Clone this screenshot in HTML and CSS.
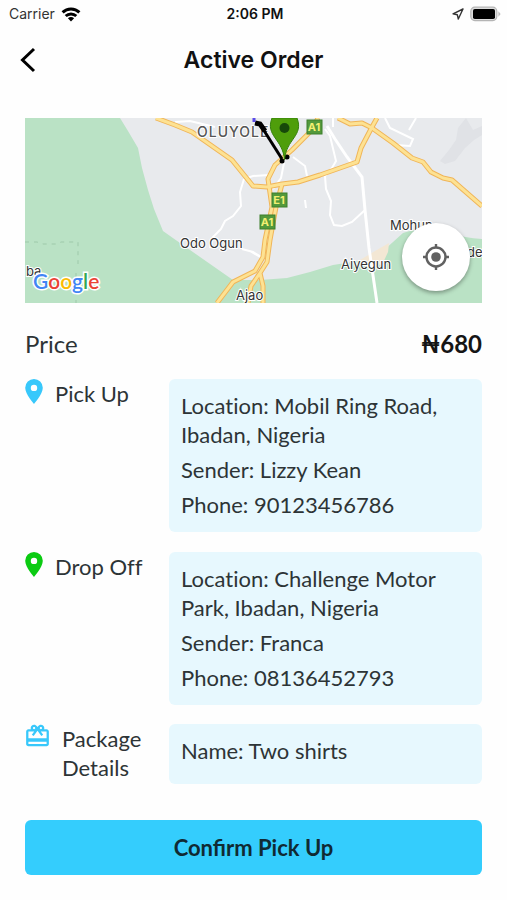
FILE: index.html
```html
<!DOCTYPE html>
<html lang="en">
<head>
<meta charset="utf-8">
<meta name="viewport" content="width=device-width, initial-scale=1">
<title>Active Order</title>
<link rel="stylesheet" href="styles.css">
</head>
<body>
<div class="status">
  <div class="status-left"><span>Carrier</span>
    <svg width="20" height="15" viewBox="0 0 20 15" fill="none" stroke="#000" stroke-width="3" aria-hidden="true"><path d="M1.6 5.4C6.3.9 13.7.9 18.4 5.4"/><path d="M4.7 9C7.7 6.2 12.3 6.2 15.3 9"/><path d="M10 14.5 6.9 11.3C8.6 9.7 11.4 9.7 13.1 11.3Z" fill="#000" stroke="none"/></svg>
  </div>
  <time class="status-time">2:06 PM</time>
  <div class="status-right">
    <svg width="12" height="12" viewBox="0 0 12 12" fill="none" stroke="#333" stroke-width="1.4" stroke-linejoin="round" aria-hidden="true"><path d="M11 1 1 5.8 5.3 6.7 6.3 11Z"/></svg>
    <svg width="31" height="16" viewBox="0 0 31 16" aria-hidden="true"><rect x=".8" y="1.2" width="26" height="13.4" rx="4" fill="#ddd" stroke="#b5b5b5" stroke-width="1.2"/><rect x="3" y="3" width="22" height="10" rx="1.8"/><path d="M28.4 5.2 30.6 8 28.4 10.8Z" fill="#bbb"/></svg>
  </div>
</div>
<header class="header">
  <button class="back" type="button" aria-label="Back"><svg width="16" height="26" viewBox="0 0 16 26" fill="none" stroke="#000" stroke-width="3"><path d="M14 2 2.5 13 14 24"/></svg></button>
  <h1>Active Order</h1>
</header>
<main class="content">
  <div class="map">
    <svg class="map-art" viewBox="0 0 457 185" role="img" aria-label="Map of the route">
      <rect width="457" height="185" fill="#e8eaed"/>
      <path d="M0 0H95L103 13 113 30 117 50 123 72 129 91 138 113 155 125 208 162 235 162 262 160 285 154 308 147 340 142 358 133 378 115Q400 108 420 114T457 121V185H0Z" fill="#bae2c5"/>
      <path d="M335 142 350 133 364 125 363 134 357 147 338 145Z" fill="#f3e7d4"/>
      <path d="M441 0 433 10 431 22 424 32 415 43 420 46 430 43 440 30 449 22 457 17V8L448 12Z" fill="#e0e2e6"/>
      <path d="M0 124H12L18 126H32L36 124H53V146M51 155V185" fill="none" stroke="#9ec9aa" stroke-dasharray="4 5"/>
      <g fill="none" stroke="#fff" stroke-width="2">
        <path d="M302 8 310 21 322 39 337 59 340 92 344 130 352 185" stroke-width="3"/>
        <path d="M300 11 305 18 311 43 307 50 300 58 301 71 306 83 305 97 309 107 317 108 327 104 340 92M150 4 165 3 190 9M219 61 215 74 216 88 208 98 200 103 196 111 188 119 185 130M219 61 228 58 244 57M217 131 228 134 238 140M268 39 280 48 282 58M280 82 281 90M360 0 365 10 388 21 385 28 370 27M308 0V9M259 45 256 60 248 71M225 133 237 140M391 0 384 12"/>
      </g>
      <g fill="none" stroke-linejoin="round">
        <g stroke="#f0b558" stroke-width="5">
          <path id="r1" d="M131 0 150 7 167 14 187 28 207 42 228 68 242 69 257 66 273 64 295 57 332 44 336 30 347 9 352 0"/>
          <path id="r2" d="M313 0 325 6 337 5 347 10 368 25 387 40 398 44 406 54 418 60 427 62 457 88"/>
          <path id="r3" d="M293 0 287 12 267 32 250 47 243 61 247 89 240 122 238 139 230 153 208 164 192 185"/>
          <path id="r4" d="M257 66 251 89 245 122 242 144 235 155 238 168V185M235 155 226 168 223 185"/>
        </g>
        <g stroke="#fde293" stroke-width="3"><use href="#r1"/><use href="#r2"/><use href="#r3"/><use href="#r4"/></g>
      </g>
      <g class="shield"><rect x="282" y="2" width="15" height="14"/><rect x="247" y="75" width="15" height="14"/><rect x="235" y="97" width="15" height="14"/><text x="289" y="13">A1</text><text x="254" y="86">E1</text><text x="242" y="108">A1</text></g>
      <g class="place"><text x="172" y="19" class="district">OLUYOLE</text><text x="155" y="130">Odo Ogun</text><text x="211" y="182">Ajao</text><text x="316" y="151">Aiyegun</text><text x="365" y="112">Mohun</text><text x="442" y="139">de</text><text x="1" y="158">ba</text></g>
      <path d="M230 5 235 6 240 13" fill="none" stroke="#000" stroke-width="5"/><path d="M238 11 257 41" fill="none" stroke="#000" stroke-width="3"/><path d="M229 0V4" stroke="#5a4be8" stroke-width="3"/><circle cx="257" cy="43" r="2.5"/><circle cx="262" cy="39" r="2.5"/>
      <path d="M247 0C240 18 258 21 259.500 42 261 21 279 18 272 0Z" fill="#4f9e0b" stroke="#35810b"/><circle cx="259.500" cy="10" r="5" fill="#17480a"/>
      <text x="8" y="171" class="google"><tspan fill="#4285f4">G</tspan><tspan fill="#ea4335">o</tspan><tspan fill="#fbbc05">o</tspan><tspan fill="#4285f4">g</tspan><tspan fill="#34a853">l</tspan><tspan fill="#ea4335">e</tspan></text>
    </svg>
    <button class="locate" type="button" aria-label="My location"><svg width="28" height="28" viewBox="0 0 28 28" fill="none" stroke="#616161" stroke-width="2.400"><circle cx="14" cy="14" r="9.500"/><circle cx="14" cy="14" r="4.800" fill="#616161" stroke="none"/><path d="M14 1V5M14 23V27M1 14H5M23 14H27"/></svg></button>
  </div>
  <div class="price"><span>Price</span><strong>₦680</strong></div>
  <section class="row">
    <h2 class="label"><svg width="18" height="25" viewBox="0 0 18 25" aria-hidden="true"><path fill="#38c8fb" fill-rule="evenodd" d="M9 0A8.800 8.800 0 0 0 .2 8.800C.2 15.300 9 25 9 25S17.800 15.300 17.800 8.800A8.800 8.800 0 0 0 9 0ZM9 5.700A3.200 3.200 0 1 1 9 12.100 3.200 3.200 0 0 1 9 5.700Z"/></svg><span>Pick Up</span></h2>
    <div class="card"><p>Location: Mobil Ring Road, Ibadan, Nigeria</p><p>Sender: Lizzy Kean</p><p>Phone: 90123456786</p></div>
  </section>
  <section class="row">
    <h2 class="label"><svg width="18" height="25" viewBox="0 0 18 25" aria-hidden="true"><path fill="#0bcb12" fill-rule="evenodd" d="M9 0A8.800 8.800 0 0 0 .2 8.800C.2 15.300 9 25 9 25S17.800 15.300 17.800 8.800A8.800 8.800 0 0 0 9 0ZM9 5.700A3.200 3.200 0 1 1 9 12.100 3.200 3.200 0 0 1 9 5.700Z"/></svg><span>Drop Off</span></h2>
    <div class="card"><p>Location: Challenge Motor Park, Ibadan, Nigeria</p><p>Sender: Franca</p><p>Phone: 08136452793</p></div>
  </section>
  <section class="row">
    <h2 class="label package"><svg width="25" height="24" viewBox="1 2 22 20" fill="#38c8fb" aria-hidden="true"><path d="M20 6h-2.180c.11-.31.18-.65.18-1 0-1.660-1.340-3-3-3-1.050 0-1.960.54-2.500 1.350l-.5.670-.5-.680C10.960 2.540 10.050 2 9 2 7.340 2 6 3.340 6 5c0 .35.070.69.180 1H4c-1.110 0-1.990.89-1.990 2L2 19c0 1.110.89 2 2 2h16c1.110 0 2-.89 2-2V8c0-1.110-.89-2-2-2zm-5-2c.55 0 1 .45 1 1s-.45 1-1 1-1-.45-1-1 .45-1 1-1zM9 4c.55 0 1 .45 1 1s-.45 1-1 1-1-.45-1-1 .45-1 1-1zm11 15H4v-2h16v2zm0-5H4V8h5.080L7 10.830 8.620 12 12 7.400l3.380 4.600L17 10.830 14.920 8H20v6z"/></svg><span>Package Details</span></h2>
    <div class="card card-short"><p>Name: Two shirts</p></div>
  </section>
  <button class="confirm" type="button">Confirm Pick Up</button>
</main>
</body>
</html>
```
FILE: styles.css
```css
* { box-sizing: border-box; }
body { margin: 0; background: #fefefe; color: #2d3436; font: 22px/29px Lato, "Noto Sans", sans-serif; }
button { border: 0; padding: 0; font: inherit; color: inherit; cursor: pointer; }
h1, h2, p { margin: 0; font-weight: 400; font-size: inherit; }
svg { display: block; flex: none; }

.status { display: grid; grid-template-columns: 1fr auto 1fr; align-items: center; height: 28px; padding: 0 6px 0 9px; font: 14px/20px Inter, sans-serif; color: #333; }
.status-left, .status-right { display: flex; align-items: center; gap: 6px; }
.status-right { justify-content: flex-end; }
.status-time { font-weight: 600; color: #111; }

.header { display: grid; grid-template-columns: 44px 1fr 44px; align-items: center; height: 64px; padding: 0 8px; }
.back { display: grid; place-items: center; height: 44px; background: none; padding-right: 4px; }
.header h1 { text-align: center; font: 600 23px/28px Inter, sans-serif; color: #111; }

.content { padding: 26px 25px 24px; }
.map { position: relative; }
.map-art { width: 100%; height: auto; }
.place { font: 13px Inter, sans-serif; fill: #333; stroke: #fff; stroke-width: 2px; paint-order: stroke; }
.place .district { font-size: 14px; font-weight: 500; letter-spacing: 1px; fill: #555; }
.shield { fill: #53993b; stroke: #3d7f2c; }
.shield text { font: 700 11px Inter, sans-serif; fill: #f2ef72; stroke: none; text-anchor: middle; }
.google { font: 600 21px Lato, sans-serif; stroke: #fff; stroke-width: 3px; paint-order: stroke; }
.locate { position: absolute; right: 12px; bottom: 12px; width: 68px; height: 68px; display: grid; place-items: center; border-radius: 50%; background: #fff; box-shadow: 0 2px 4px rgb(0 0 0 / 35%); }

.price { display: flex; justify-content: space-between; margin: 26px 0 20px; font-size: 24px; line-height: 30px; }
.price strong { color: #151515; }
.row { display: grid; grid-template-columns: 144px 1fr; align-items: start; margin-bottom: 20px; font-variant-ligatures: none; }
.row:last-of-type { margin-top: -1px; }
.label { display: flex; align-items: flex-start; gap: 12px; }
.package { padding-right: 16px; }
.card { background: #e7f8fe; border-radius: 6px; padding: 12px 12px 13px; display: grid; gap: 6px; }
.card-short { min-height: 60px; align-content: start; }
.confirm { display: block; width: 100%; margin-top: 36px; padding: 13px; border-radius: 6px; background: #34cdfd; color: #102a33; font-weight: 700; }
```
